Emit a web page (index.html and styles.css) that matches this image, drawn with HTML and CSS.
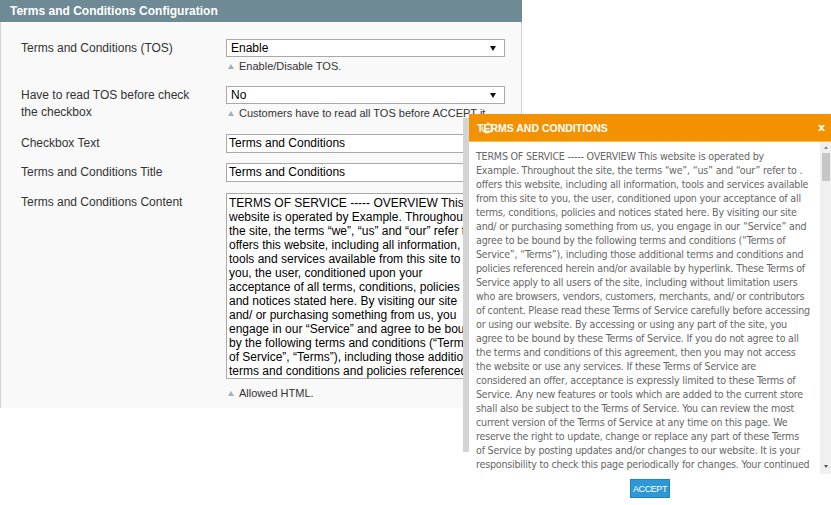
FILE: index.html
```html
<!DOCTYPE html>
<html lang="en">
<head>
<meta charset="utf-8">
<title>Terms and Conditions Configuration</title>
<link rel="stylesheet" href="styles.css">
</head>
<body>
<section class="panel">
  <header class="panel-head">Terms and Conditions Configuration</header>
  <div class="panel-body">
    <div class="row row-hinted">
      <div class="lbl">Terms and Conditions (TOS)</div>
      <div class="val">
        <div class="select"><span>Enable</span><span class="arrow"></span></div>
        <p class="hint"><span class="tri"></span>Enable/Disable TOS.</p>
      </div>
    </div>
    <div class="row row-hinted">
      <div class="lbl">Have to read TOS before check the checkbox</div>
      <div class="val">
        <div class="select"><span>No</span><span class="arrow"></span></div>
        <p class="hint"><span class="tri"></span>Customers have to read all TOS before ACCEPT it</p>
      </div>
    </div>
    <div class="row row-input">
      <div class="lbl">Checkbox Text</div>
      <div class="val"><div class="input">Terms and Conditions</div></div>
    </div>
    <div class="row row-input">
      <div class="lbl">Terms and Conditions Title</div>
      <div class="val"><div class="input">Terms and Conditions</div></div>
    </div>
    <div class="row">
      <div class="lbl">Terms and Conditions Content</div>
      <div class="val">
        <div class="textarea">TERMS OF SERVICE ----- OVERVIEW This
website is operated by Example. Throughout
the site, the terms “we”, “us” and “our” refer to .
offers this website, including all information,
tools and services available from this site to
you, the user, conditioned upon your
acceptance of all terms, conditions, policies
and notices stated here. By visiting our site
and/ or purchasing something from us, you
engage in our “Service” and agree to be bound
by the following terms and conditions (“Terms
of Service”, “Terms”), including those additional
terms and conditions and policies referenced</div>
        <p class="hint hint-last"><span class="tri"></span>Allowed HTML.</p>
      </div>
    </div>
  </div>
</section>

<div class="popup-shade"></div>
<div class="popup">
  <div class="popup-head">
    <span class="popup-title">TERMS AND CONDITIONS</span>
    <svg class="spin" width="14" height="14" viewBox="0 0 14 14"><path d="M7 2.2 A4.8 4.8 0 1 1 2.5 5.4" fill="none" stroke="rgba(255,255,255,0.75)" stroke-width="1.6"/></svg>
    <span class="close">x</span>
  </div>
  <div class="popup-body">
    <div class="popup-text">
<div>TERMS OF SERVICE ----- OVERVIEW This website is operated by</div>
<div>Example. Throughout the site, the terms “we”, “us” and “our” refer to .</div>
<div>offers this website, including all information, tools and services available</div>
<div>from this site to you, the user, conditioned upon your acceptance of all</div>
<div>terms, conditions, policies and notices stated here. By visiting our site</div>
<div>and/ or purchasing something from us, you engage in our “Service” and</div>
<div>agree to be bound by the following terms and conditions (“Terms of</div>
<div>Service”, “Terms”), including those additional terms and conditions and</div>
<div>policies referenced herein and/or available by hyperlink. These Terms of</div>
<div>Service apply to all users of the site, including without limitation users</div>
<div>who are browsers, vendors, customers, merchants, and/ or contributors</div>
<div>of content. Please read these Terms of Service carefully before accessing</div>
<div>or using our website. By accessing or using any part of the site, you</div>
<div>agree to be bound by these Terms of Service. If you do not agree to all</div>
<div>the terms and conditions of this agreement, then you may not access</div>
<div>the website or use any services. If these Terms of Service are</div>
<div>considered an offer, acceptance is expressly limited to these Terms of</div>
<div>Service. Any new features or tools which are added to the current store</div>
<div>shall also be subject to the Terms of Service. You can review the most</div>
<div>current version of the Terms of Service at any time on this page. We</div>
<div>reserve the right to update, change or replace any part of these Terms</div>
<div>of Service by posting updates and/or changes to our website. It is your</div>
<div>responsibility to check this page periodically for changes. Your continued</div>
<div>use of or access to the website following the posting of any changes</div>
    </div>
    <div class="scrollbar">
      <span class="sb-up"></span>
      <span class="sb-thumb"></span>
      <span class="sb-fill"></span>
      <span class="sb-down"></span>
    </div>
  </div>
  <div class="popup-foot"><button class="accept">ACCEPT</button></div>
</div>
</body>
</html>
```
FILE: styles.css
```css
html, body {
  margin: 0;
  padding: 0;
  background: #ffffff;
}
body {
  width: 831px;
  height: 505px;
  overflow: hidden;
  position: relative;
  font-family: "Liberation Sans", Arial, sans-serif;
}

.panel {
  width: 522px;
}
.panel-head {
  height: 22px;
  line-height: 22px;
  background: #6e8a94;
  color: #ffffff;
  font-weight: bold;
  font-size: 12px;
  padding-left: 10px;
}
.panel-body {
  background: #f9f9f9;
  border-left: 1px solid #d3d3d3;
  border-right: 1px solid #d3d3d3;
  padding: 17px 0 8px 20px;
}

.row {
  display: grid;
  grid-template-columns: 205px 279px;
  align-items: start;
}
.row-hinted { margin-bottom: 13px; }
.row-input { margin-bottom: 10px; }
.row-input + .row-input { margin-bottom: 11px; }

.lbl {
  font-size: 12px;
  line-height: 17px;
  color: #333333;
  padding-top: 1px;
  width: 180px;
}

.select {
  height: 18px;
  box-sizing: border-box;
  border: 1px solid #a9a9a9;
  background: #ffffff;
  display: flex;
  align-items: center;
  justify-content: space-between;
  padding: 0 8px 0 4px;
  font-size: 12px;
  color: #000000;
}
.arrow {
  width: 0;
  height: 0;
  border-left: 3px solid transparent;
  border-right: 3px solid transparent;
  border-top: 5px solid #111111;
}

.hint {
  margin: 2px 0 0 0;
  font-size: 11px;
  line-height: 14px;
  color: #333333;
  display: flex;
  align-items: center;
  padding-left: 2px;
  white-space: nowrap;
}
.tri {
  width: 0;
  height: 0;
  border-left: 3px solid transparent;
  border-right: 3px solid transparent;
  border-bottom: 5px solid #a3b0b6;
  margin-right: 5px;
}
.hint-last { margin-top: 7px; }

.input {
  height: 19px;
  box-sizing: border-box;
  border: 1px solid #a9a9a9;
  background: #ffffff;
  font-size: 12px;
  line-height: 17px;
  padding-left: 2px;
  color: #000000;
}

.textarea {
  height: 186px;
  box-sizing: border-box;
  border: 1px solid #a9a9a9;
  background: #ffffff;
  font-size: 12px;
  line-height: 14px;
  padding: 2px 0 1px 2px;
  color: #000000;
  white-space: pre;
  overflow: hidden;
}

/* popup overlay */
.popup-shade {
  position: absolute;
  left: 463px;
  top: 118px;
  width: 10px;
  height: 334px;
  background: #d4d4d4;
}
.popup {
  position: absolute;
  left: 469px;
  top: 114px;
  width: 362px;
}
.popup-head {
  position: relative;
  height: 27px;
  background: #f39200;
  border-bottom: 1px solid #f6b85c;
  display: flex;
  align-items: center;
  justify-content: space-between;
  padding: 0 6px 0 8px;
}
.popup-title {
  color: #ffffff;
  font-weight: bold;
  font-size: 10.5px;
  font-family: "Liberation Sans", Arial, sans-serif;
}
.spin {
  position: absolute;
  left: 11px;
  top: 7px;
}
.close {
  color: #ffffff;
  font-weight: bold;
  font-size: 11px;
  font-family: "DejaVu Sans", sans-serif;
}
.popup-body {
  display: flex;
  height: 332px;
  background: #ffffff;
}
.popup-text {
  flex: 1;
  min-width: 0;
  overflow: hidden;
  padding: 7px 0 0 7px;
  font-family: "DejaVu Sans Condensed", "DejaVu Sans", sans-serif;
  font-size: 10.6px;
  letter-spacing: -0.2px;
  line-height: 14px;
  color: #666666;
  white-space: nowrap;
}
.scrollbar {
  width: 11px;
  flex: none;
  background: #f0f0f0;
  display: flex;
  flex-direction: column;
  align-items: center;
}
.sb-up {
  margin-top: 4px;
  width: 0;
  height: 0;
  border-left: 2.5px solid transparent;
  border-right: 2.5px solid transparent;
  border-bottom: 3px solid #8a8a8a;
}
.sb-thumb {
  margin-top: 4px;
  width: 8px;
  height: 28px;
  background: #c6c6c6;
}
.sb-fill { flex: 1; }
.sb-down {
  margin-bottom: 6px;
  width: 0;
  height: 0;
  border-left: 2.5px solid transparent;
  border-right: 2.5px solid transparent;
  border-top: 3px solid #505050;
}
.popup-foot {
  display: flex;
  justify-content: center;
  padding-top: 5px;
}
.accept {
  width: 40px;
  height: 19px;
  padding: 0;
  border: 1px solid #1f84bf;
  background: #2d98d4;
  color: #ffffff;
  font-family: "Liberation Sans", Arial, sans-serif;
  font-size: 9px;
  letter-spacing: -0.4px;
  cursor: pointer;
}
```
